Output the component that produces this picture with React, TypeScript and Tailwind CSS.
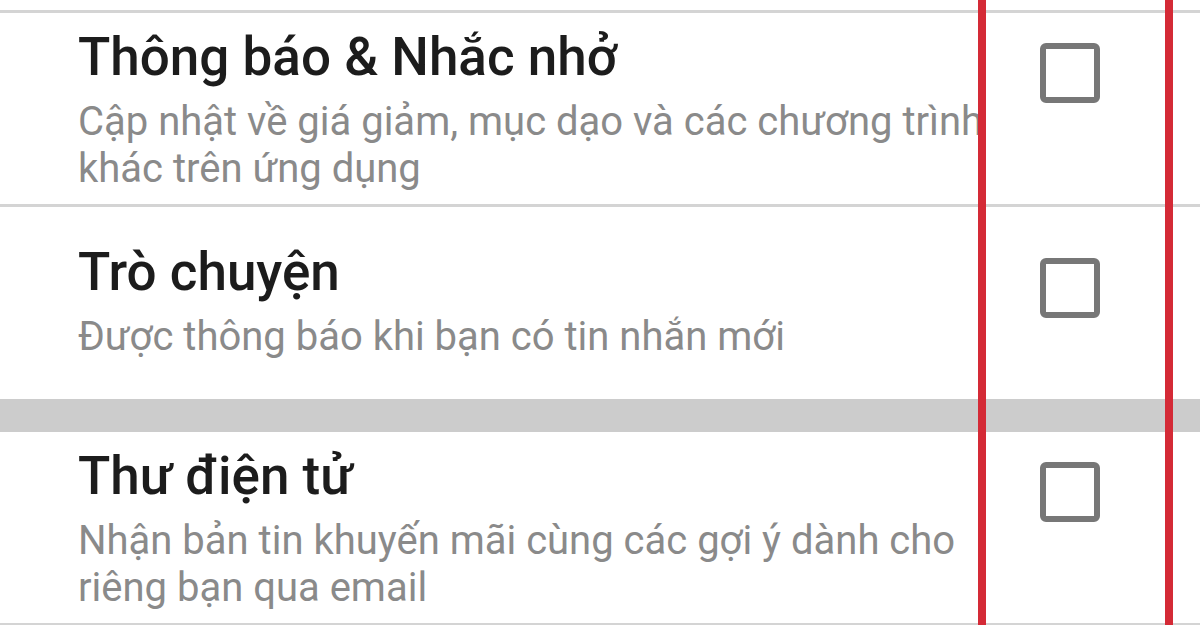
import React from "react";

type Item = { title: string; desc: string };

function Checkbox() {
  return (
    <div className="mt-[16px] h-[60px] w-[60px] shrink-0 rounded-[6px] border-[6px] border-[#777777] bg-white" />
  );
}

function Row({ item, tall }: { item: Item; tall?: boolean }) {
  return (
    <div
      className={
        tall
          ? "flex min-h-[192px] items-center pl-[78px] pr-[100px] pb-[4px]"
          : "flex min-h-[191px] items-center pl-[78px] pr-[100px] pt-[12px] pb-[11px]"
      }
    >
      <div className="flex w-full items-start gap-[20px]">
        <div className="min-w-0 flex-1">
          <div className="text-[53px] font-medium leading-[60px] text-[#1c1c1c]">{item.title}</div>
          <div className="mt-[11px] text-[40px] leading-[47px] text-[#8a8a8a]">{item.desc}</div>
        </div>
        <Checkbox />
      </div>
    </div>
  );
}

export default function App() {
  const items: Item[] = [
    {
      title: "Thông báo & Nhắc nhở",
      desc: "Cập nhật về giá giảm, mục dạo và các chương trình khác trên ứng dụng",
    },
    { title: "Trò chuyện", desc: "Được thông báo khi bạn có tin nhắn mới" },
    {
      title: "Thư điện tử",
      desc: "Nhận bản tin khuyến mãi cùng các gợi ý dành cho riêng bạn qua email",
    },
  ];
  return (
    <div
      className="relative h-[625px] w-[1200px] overflow-hidden bg-white"
      style={{ fontFamily: "Roboto, 'Noto Sans', sans-serif" }}
    >
      <div className="h-[10px]" />
      <div className="h-[3px] bg-[#d4d4d4]" />
      <Row item={items[0]} />
      <div className="h-[3px] bg-[#d4d4d4]" />
      <Row item={items[1]} tall />
      <div className="h-[33px] bg-[#cccccc]" />
      <Row item={items[2]} />
      <div className="h-[3px] bg-[#d4d4d4]" />
      <div className="pointer-events-none absolute top-0 bottom-0 left-[978px] w-[195px] border-x-[8px] border-[#d42a36]" />
    </div>
  );
}
